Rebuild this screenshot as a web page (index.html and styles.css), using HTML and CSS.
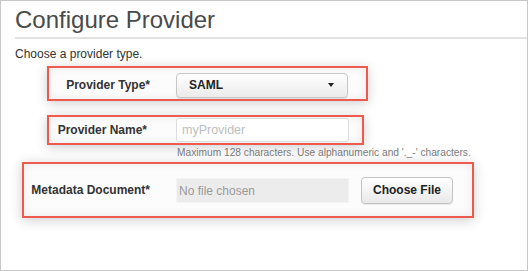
FILE: index.html
```html
<!DOCTYPE html>
<html lang="en">
<head>
	<meta charset="UTF-8">
	<title>Configure Provider</title>
	<link rel="stylesheet" href="styles.css">
</head>
<body>
<div class="page">
	<h1 class="title">Configure Provider</h1>
	<p class="intro">Choose a provider type.</p>
	<div class="field hl row-type">
		<label class="field-label">Provider Type*</label>
		<div class="select">
			<span class="select-value">SAML</span>
			<span class="caret"></span>
		</div>
	</div>
	<div class="field hl row-name">
		<label class="field-label" for="provider-name">Provider Name*</label>
		<input type="text" id="provider-name" class="text-input" placeholder="myProvider"/>
	</div>
	<div class="help">Maximum 128 characters. Use alphanumeric and '._-' characters.</div>
	<div class="field hl row-meta">
		<label class="field-label">Metadata Document*</label>
		<div class="file-name">No file chosen</div>
		<div class="btn">Choose File</div>
	</div>
</div>
</body>
</html>
```

FILE: styles.css
```css
html, body {
	margin: 0;
	padding: 0;
	background: #fff;
}
body {
	font-family: "Liberation Sans", Arial, sans-serif;
	color: #333;
}
.page {
	box-sizing: border-box;
	width: 528px;
	height: 271px;
	border: 1px solid #c8c8c8;
	overflow: hidden;
}
.title {
	margin: 0 0 0 14px;
	padding: 6px 0 4px;
	font-size: 24px;
	font-weight: normal;
	line-height: 26px;
	color: #4a4a4a;
	border-bottom: 2px solid #e2e2e2;
}
.intro {
	margin: 8px 0 0 14px;
	font-size: 12px;
	line-height: 14px;
	color: #333;
}
.field {
	display: flex;
	align-items: center;
	box-sizing: border-box;
}
.hl {
	border: 2px solid #ee5a4e;
	box-shadow: 0 2px 12px rgba(0, 0, 0, .2), inset 0 0 10px rgba(0, 0, 0, .08);
	background: #fcfcfc;
}
.field-label {
	font-size: 12px;
	font-weight: bold;
	color: #333;
	text-align: right;
	margin-right: 26px;
}
.row-type {
	margin: 5px 0 0 46px;
	width: 321px;
	height: 35px;
	padding-top: 3px;
}
.row-type .field-label {
	width: 101px;
}
.row-name {
	margin: 14px 0 0 46px;
	width: 317px;
	height: 30px;
}
.row-name .field-label {
	width: 98px;
	margin-right: 29px;
}
.row-meta {
	margin: 2px 0 0 21px;
	width: 452px;
	height: 56px;
}
.row-meta .field-label {
	width: 126px;
}
.select {
	box-sizing: border-box;
	display: flex;
	align-items: center;
	justify-content: space-between;
	width: 172px;
	height: 25px;
	padding: 0 13px 0 12px;
	border: 1px solid #c6c6c6;
	border-radius: 4px;
	background: linear-gradient(#ffffff, #ebebeb);
	box-shadow: 0 1px 1px rgba(0, 0, 0, .08);
}
.select-value {
	font-size: 12px;
	font-weight: bold;
	color: #222;
}
.caret {
	width: 0;
	height: 0;
	border-left: 3px solid transparent;
	border-right: 3px solid transparent;
	border-top: 4px solid #222;
}
.text-input {
	box-sizing: border-box;
	width: 173px;
	height: 24px;
	padding: 0 5px;
	border: 1px solid #dcdcdc;
	border-radius: 3px;
	font-family: inherit;
	font-size: 12.5px;
	background: #fff;
	outline: none;
}
.text-input::placeholder {
	color: #bdbdbd;
}
.help {
	margin: 1px 0 0 176px;
	font-size: 10.2px;
	line-height: 14px;
	color: #7a7a7a;
	white-space: nowrap;
}
.file-name {
	box-sizing: border-box;
	width: 173px;
	height: 25px;
	padding: 0 2px;
	line-height: 25px;
	font-size: 12px;
	color: #9a9a9a;
	background: #ececec;
	border: 1px solid #f4f4f4;
}
.btn {
	box-sizing: border-box;
	margin-left: 12px;
	width: 92px;
	height: 27px;
	line-height: 25px;
	text-align: center;
	font-size: 12px;
	font-weight: bold;
	color: #222;
	border: 1px solid #c4c4c4;
	border-radius: 4px;
	background: linear-gradient(#ffffff, #e9e9e9);
	box-shadow: 0 1px 1px rgba(0, 0, 0, .08);
}
```
